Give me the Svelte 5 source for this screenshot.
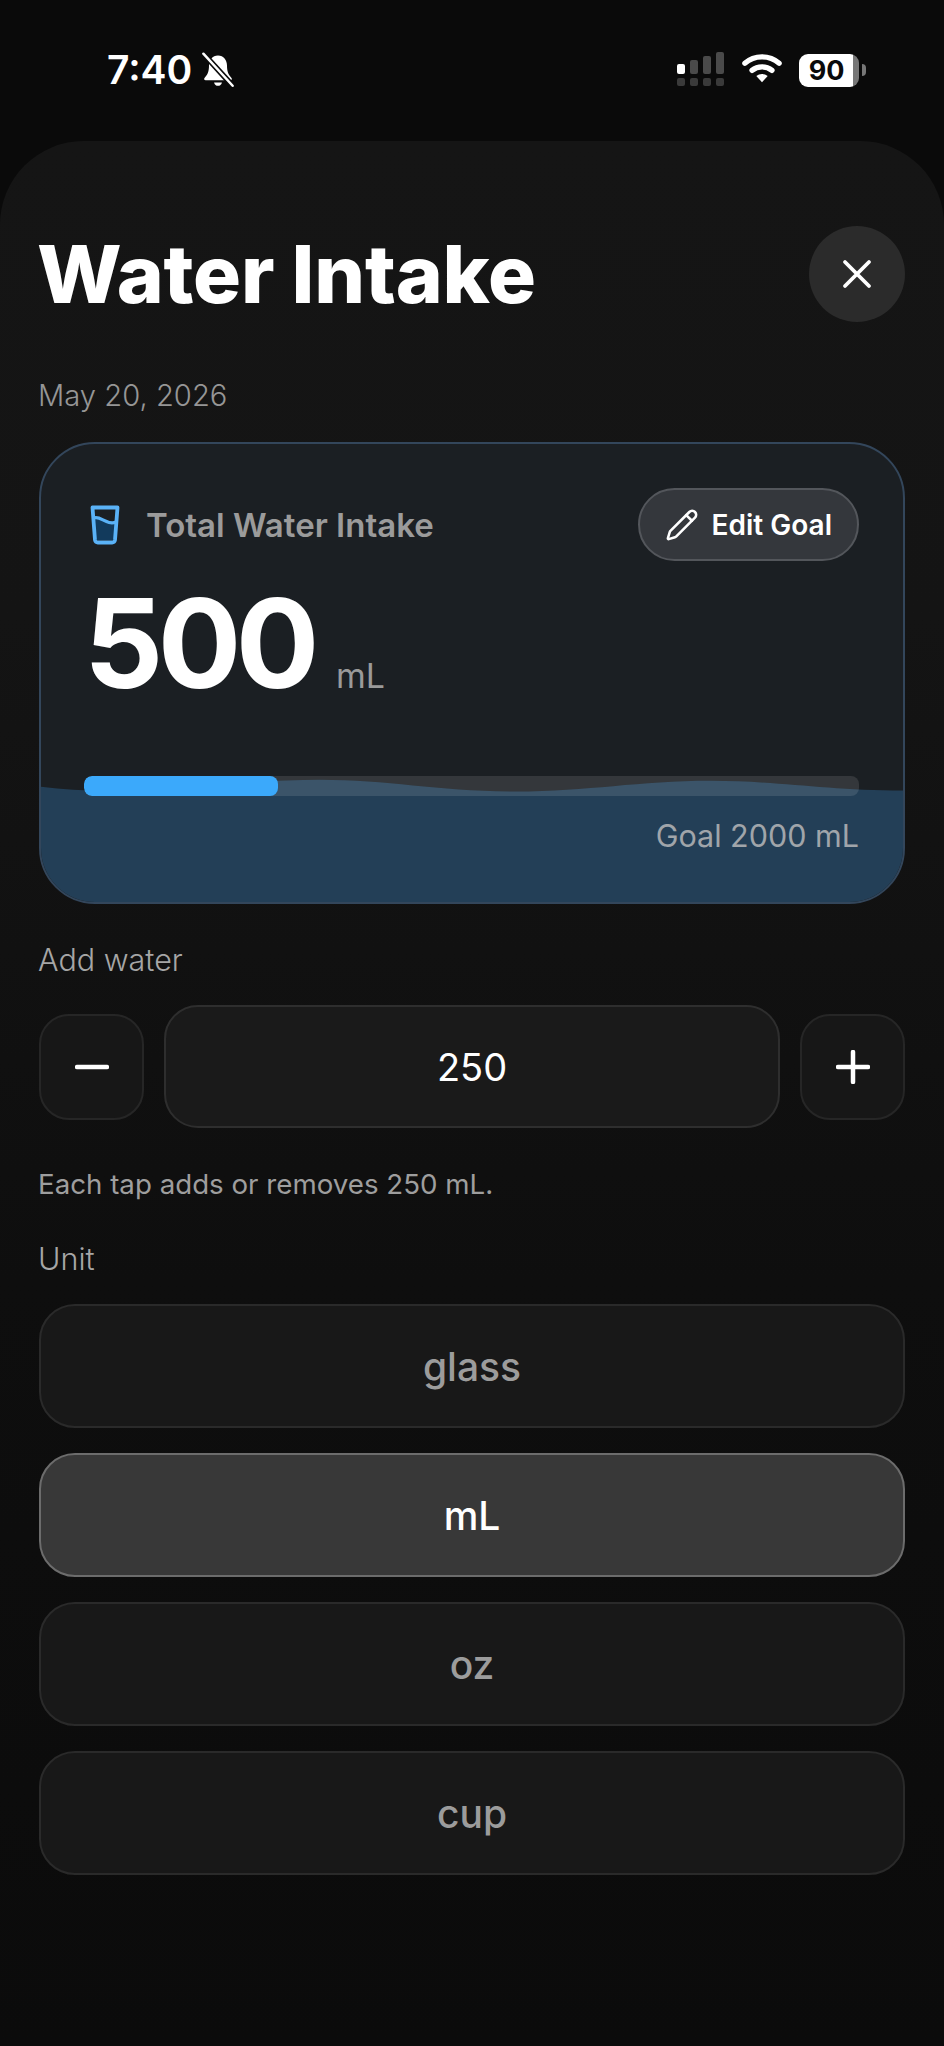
<script lang="ts">
  const units = ['glass', 'mL', 'oz', 'cup']
  let selected = $state('mL')
  let step = $state('250')
  const total = 500
  const goal = 2000
</script>

<div class="screen">
  <div class="status">
    <div class="status-left">
      <span class="time">7:40</span>
      <svg class="bell" viewBox="0 0 32 32" aria-hidden="true">
        <path d="M16 3c-5 0-8 4-8 9 0 5-1 8-4 11-.7.8-.2 2 1 2h22c1.200 0 1.700-1.200 1-2-3-3-4-6-4-11 0-5-3-9-8-9z" fill="#fff" />
        <path d="M12.500 27h7c-.5 2-1.800 3-3.500 3s-3-1-3.500-3z" fill="#fff" />
        <path d="M3 1.500 29 30" stroke="#0b0b0b" stroke-width="5" />
        <path d="M3 1.500 29 30" stroke="#fff" stroke-width="2.200" stroke-linecap="round" />
      </svg>
    </div>
    <div class="status-right">
      <svg class="signal" viewBox="0 0 50 36" aria-hidden="true">
        <rect x="2" y="12" width="8" height="10" rx="2" fill="#fff" />
        <rect x="15" y="8" width="8" height="14" rx="2" fill="#4a4a4a" />
        <rect x="28" y="4" width="8" height="18" rx="2" fill="#4a4a4a" />
        <rect x="41" y="0" width="8" height="22" rx="2" fill="#4a4a4a" />
        <rect x="2" y="26" width="8" height="8" rx="2" fill="#3a3a3a" />
        <rect x="15" y="26" width="8" height="8" rx="2" fill="#3a3a3a" />
        <rect x="28" y="26" width="8" height="8" rx="2" fill="#3a3a3a" />
        <rect x="41" y="26" width="8" height="8" rx="2" fill="#3a3a3a" />
      </svg>
      <svg class="wifi" viewBox="0 0 42 32" aria-hidden="true">
        <path d="M3 11C13 2 29 2 39 11" fill="none" stroke="#fff" stroke-width="5.500" stroke-linecap="round" />
        <path d="M10.500 18.500c6-5 15-5 21 0" fill="none" stroke="#fff" stroke-width="5.500" stroke-linecap="round" />
        <path d="M15 24.500c3.500-3 8.500-3 12 0l-6 6.500z" fill="#fff" />
      </svg>
      <div class="battery">
        <div class="battery-body">90</div>
        <div class="battery-cap"></div>
      </div>
    </div>
  </div>

  <div class="sheet">
    <header class="sheet-head">
      <h1>Water Intake</h1>
      <button type="button" class="close" aria-label="Close">
        <svg viewBox="0 0 30 30" aria-hidden="true">
          <path d="M3 3 27 27M27 3 3 27" fill="none" stroke="#fff" stroke-width="3.800" stroke-linecap="round" />
        </svg>
      </button>
    </header>

    <p class="date">May 20, 2026</p>

    <section class="card">
      <svg class="wave" viewBox="0 0 866 134" preserveAspectRatio="none" aria-hidden="true">
        <path d="M0 16C90 28 180 9 280 9C350 9 400 21 477 21C550 21 600 10 673 10C740 10 790 20 866 20V134H0Z" fill="#233f57" />
      </svg>

      <div class="card-head">
        <div class="card-title">
          <svg class="glass" viewBox="0 0 30 40" aria-hidden="true">
            <path d="M5 15C10 11 17 21 25 17L24 35H6Z" fill="#123a5c" />
            <path d="M2.500 2.500H27.500L25 35a3 3 0 0 1-3 2.500H8A3 3 0 0 1 5 35Z" fill="none" stroke="#5ab2f7" stroke-width="3.800" stroke-linejoin="round" />
            <path d="M4 13C10 10 17 21 26 17" fill="none" stroke="#5ab2f7" stroke-width="3.200" />
          </svg>
          <span>Total Water Intake</span>
        </div>
        <button type="button" class="edit">
          <svg viewBox="0 0 24 24" aria-hidden="true">
            <path d="M21.174 6.812a1 1 0 0 0-3.986-3.987L3.842 16.174a2 2 0 0 0-.5.83l-1.321 4.352a.5.5 0 0 0 .623.622l4.353-1.32a2 2 0 0 0 .83-.497z" />
            <path d="m15 5 4 4" />
          </svg>
          Edit Goal
        </button>
      </div>

      <div class="amount">
        <span class="amount-value">{total}</span>
        <span class="amount-unit">mL</span>
      </div>

      <div class="track">
        <div class="fill" style="width: {(total / goal) * 100}%"></div>
      </div>
      <div class="goal">Goal {goal} mL</div>
    </section>

    <div class="label add-label">Add water</div>
    <div class="stepper">
      <button type="button" class="step" aria-label="Remove">
        <svg viewBox="0 0 34 34" aria-hidden="true"><path d="M2 17H32" /></svg>
      </button>
      <input class="step-input" bind:value={step} aria-label="Amount" />
      <button type="button" class="step" aria-label="Add">
        <svg viewBox="0 0 34 34" aria-hidden="true"><path d="M2 17H32M17 2V32" /></svg>
      </button>
    </div>
    <p class="hint">Each tap adds or removes 250 mL.</p>

    <div class="label unit-label">Unit</div>
    <div class="units">
      {#each units as unit}
        <button
          type="button"
          class="unit"
          class:active={selected === unit}
          onclick={() => (selected = unit)}
        >{unit}</button>
      {/each}
    </div>
  </div>
</div>

<style>
  :global(body) {
    background: #0a0a0a;
  }

  .screen {
    width: 944px;
    height: 2046px;
    overflow: hidden;
    font-family: Inter, 'Noto Sans', sans-serif;
    color: #fff;
    background: #0a0a0a;
  }

  .status {
    height: 141px;
    box-sizing: border-box;
    padding: 46px 78px 0 107px;
    display: flex;
    justify-content: space-between;
    align-items: flex-start;
  }

  .status-left {
    display: flex;
    align-items: center;
    gap: 8px;
  }

  .time {
    font-size: 39px;
    line-height: 48px;
    font-weight: 600;
  }

  .bell {
    width: 36px;
    height: 36px;
  }

  .status-right {
    display: flex;
    align-items: center;
    gap: 17px;
    height: 48px;
  }

  .signal {
    width: 50px;
    height: 36px;
  }

  .wifi {
    width: 40px;
    height: 32px;
    margin-top: -4px;
  }

  .battery {
    display: flex;
    align-items: center;
    gap: 3px;
  }

  .battery-body {
    width: 60px;
    height: 33px;
    border-radius: 9px;
    background: linear-gradient(90deg, #fff 90%, #777 90%);
    color: #0a0a0a;
    font-size: 27px;
    font-weight: 700;
    line-height: 33px;
    text-align: center;
    padding-right: 5px;
    box-sizing: border-box;
  }

  .battery-cap {
    width: 4px;
    height: 12px;
    border-radius: 0 4px 4px 0;
    background: #777;
  }

  .sheet {
    height: 1905px;
    box-sizing: border-box;
    padding: 85px 39px 0;
    border-radius: 84px 84px 0 0;
    background: linear-gradient(180deg, #151515 0%, #141414 25%, #0e0e0e 60%, #0b0b0b 100%);
  }

  .sheet-head {
    display: flex;
    align-items: center;
    justify-content: space-between;
  }

  h1 {
    margin: 0 0 0 -2px;
    font-size: 80px;
    line-height: 96px;
    font-weight: 800;
    letter-spacing: -0.2px;
  }

  .close {
    width: 96px;
    height: 96px;
    padding: 0;
    border: none;
    border-radius: 50%;
    background: #2b2b2b;
    display: flex;
    align-items: center;
    justify-content: center;
  }

  .close svg {
    width: 30px;
    height: 30px;
  }

  .date {
    margin: 54px 0 26px -1px;
    font-size: 29.200px;
    line-height: 40px;
    font-weight: 300;
    color: #969696;
  }

  .card {
    position: relative;
    height: 462px;
    box-sizing: border-box;
    padding: 44px 44px 0 44px;
    border: 2px solid #33465b;
    border-radius: 56px;
    overflow: hidden;
    background: #1b1f23;
  }

  .wave {
    position: absolute;
    left: 0;
    right: 0;
    bottom: 0;
    width: 100%;
    height: 131px;
  }

  .card-head,
  .amount,
  .track,
  .goal {
    position: relative;
  }

  .card-head {
    display: flex;
    align-items: center;
    justify-content: space-between;
    height: 73px;
  }

  .card-title {
    display: flex;
    align-items: center;
    gap: 26px;
    padding-left: 5px;
    font-size: 33px;
    font-weight: 600;
    color: #9b9b9b;
  }

  .glass {
    width: 30px;
    height: 40px;
  }

  .edit {
    display: flex;
    align-items: center;
    gap: 13px;
    height: 73px;
    box-sizing: border-box;
    padding: 0 25px;
    border: 2px solid #53565b;
    border-radius: 37px;
    background: #34373c;
    color: #fff;
    font: inherit;
    font-size: 28px;
    font-weight: 600;
  }

  .edit svg {
    width: 34px;
    height: 34px;
    fill: none;
    stroke: #fff;
    stroke-width: 1.800;
    stroke-linecap: round;
    stroke-linejoin: round;
  }

  .amount {
    display: flex;
    align-items: baseline;
    gap: 22px;
    margin-top: 17px;
    margin-left: -1px;
    height: 130px;
  }

  .amount-value {
    font-size: 124px;
    line-height: 130px;
    font-weight: 700;
    letter-spacing: -5.500px;
  }

  .amount-unit {
    font-size: 34px;
    color: #9a9a9a;
  }

  .track {
    height: 20px;
    margin-top: 68px;
    margin-left: -1px;
    border-radius: 8px;
    background: rgba(255, 255, 255, 0.11);
    overflow: hidden;
  }

  .fill {
    height: 100%;
    border-radius: 8px;
    background: #3ba9fb;
  }

  .goal {
    margin-top: 20px;
    text-align: right;
    font-size: 30.500px;
    line-height: 40px;
    color: #a0a5aa;
  }

  .label {
    margin-left: -1px;
    font-size: 30.500px;
    line-height: 40px;
    font-weight: 300;
    color: #a6a6a6;
  }

  .add-label {
    margin-top: 36px;
  }

  .stepper {
    display: flex;
    align-items: center;
    gap: 20px;
    margin-top: 25px;
  }

  .step {
    flex: 0 0 105px;
    height: 106px;
    padding: 0;
    border: 2px solid #262626;
    border-radius: 30px;
    background: #171717;
    display: flex;
    align-items: center;
    justify-content: center;
  }

  .step svg {
    width: 34px;
    height: 34px;
    fill: none;
    stroke: #fff;
    stroke-width: 4.500;
    stroke-linecap: round;
  }

  .step-input {
    flex: 1;
    min-width: 0;
    height: 123px;
    box-sizing: border-box;
    border: 2px solid #2e2e2e;
    border-radius: 34px;
    background: #1a1a1a;
    color: #fff;
    font: inherit;
    font-size: 38px;
    text-align: center;
    outline: none;
  }

  .hint {
    margin: 36px 0 0 -1px;
    font-size: 27.700px;
    line-height: 40px;
    color: #9e9e9e;
  }

  .unit-label {
    margin-top: 35px;
  }

  .units {
    display: flex;
    flex-direction: column;
    gap: 25px;
    margin-top: 25px;
  }

  .unit {
    height: 124px;
    border: 2px solid #2a2a2a;
    border-radius: 36px;
    background: #181818;
    color: #9c9c9c;
    font: inherit;
    font-size: 39px;
    font-weight: 500;
  }

  .unit.active {
    border-color: #6c6c6c;
    background: #383838;
    color: #fff;
  }
</style>
